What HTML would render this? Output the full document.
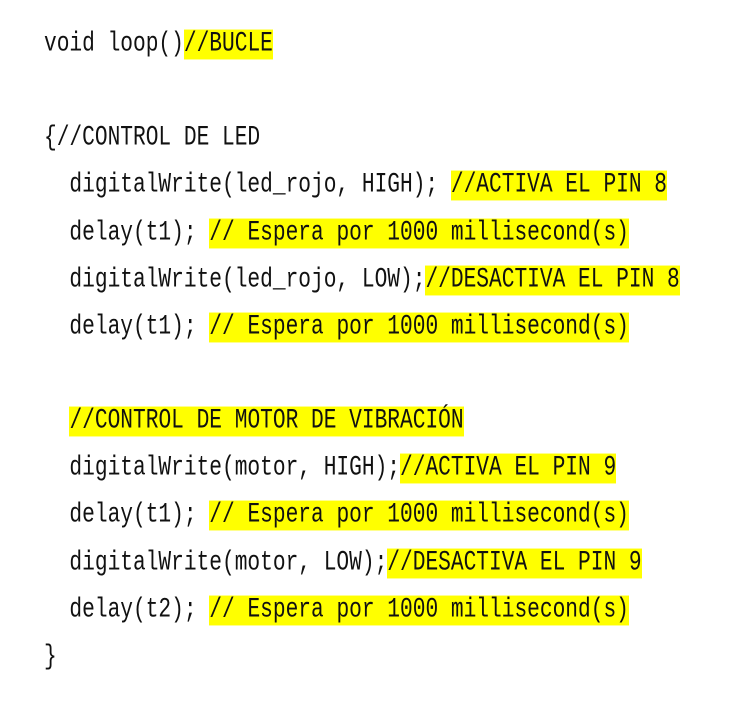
<!DOCTYPE html>
<html><head><meta charset="utf-8"><style>
html,body{margin:0;padding:0;background:#fff;width:756px;height:705px;overflow:hidden}
.l{position:absolute;left:44px;height:30px;white-space:pre;font-family:"Liberation Mono",monospace;font-size:21.2px;color:#111}
.l span{display:inline-block;line-height:23px;transform:scaleY(1.3);transform-origin:50% 50%;vertical-align:top;margin-top:3px}
.h{background:#ffff00}
</style></head><body>
<div class="l" style="top:30px"><span>void loop()</span><span class="h">//BUCLE</span></div>
<div class="l" style="top:124px"><span>{//CONTROL DE LED</span></div>
<div class="l" style="top:171px"><span>  digitalWrite(led_rojo, HIGH); </span><span class="h">//ACTIVA EL PIN 8</span></div>
<div class="l" style="top:219px"><span>  delay(t1); </span><span class="h">// Espera por 1000 millisecond(s)</span></div>
<div class="l" style="top:266px"><span>  digitalWrite(led_rojo, LOW);</span><span class="h">//DESACTIVA EL PIN 8</span></div>
<div class="l" style="top:313px"><span>  delay(t1); </span><span class="h">// Espera por 1000 millisecond(s)</span></div>
<div class="l" style="top:407px"><span>  </span><span class="h">//CONTROL DE MOTOR DE VIBRACIÓN</span></div>
<div class="l" style="top:454px"><span>  digitalWrite(motor, HIGH);</span><span class="h">//ACTIVA EL PIN 9</span></div>
<div class="l" style="top:501px"><span>  delay(t1); </span><span class="h">// Espera por 1000 millisecond(s)</span></div>
<div class="l" style="top:549px"><span>  digitalWrite(motor, LOW);</span><span class="h">//DESACTIVA EL PIN 9</span></div>
<div class="l" style="top:596px"><span>  delay(t2); </span><span class="h">// Espera por 1000 millisecond(s)</span></div>
<div class="l" style="top:643px"><span>}</span></div>
</body></html>
